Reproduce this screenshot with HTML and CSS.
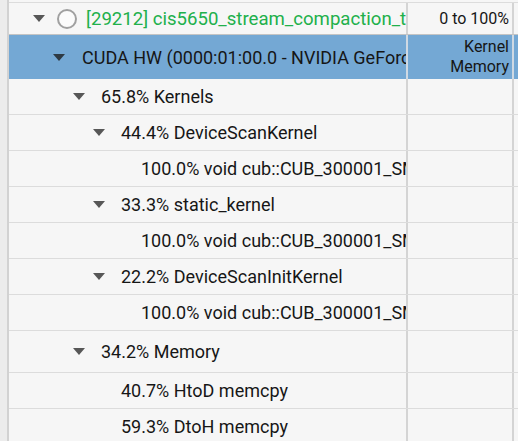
FILE: index.html
```html
<!DOCTYPE html>
<html>
<head>
<meta charset="utf-8">
<link rel="stylesheet" href="styles.css">
</head>
<body>
<div class="view">
  <div class="strip"></div>
  <div class="table">
    <div class="row row-process">
      <div class="c1 lvl0">
        <span class="toggle"><svg width="12" height="7" viewBox="0 0 12 7"><path d="M0 0H12L6 7Z"/></svg></span>
        <span class="ring"></span>
        <span class="label green">[29212] cis5650_stream_compaction_test</span>
      </div>
      <div class="c2">0 to 100%</div>
      <div class="c3"></div>
    </div>
    <div class="row row-selected">
      <div class="c1 lvl1">
        <span class="toggle"><svg width="12" height="7" viewBox="0 0 12 7"><path d="M0 0H12L6 7Z"/></svg></span>
        <span class="label">CUDA HW (0000:01:00.0 - NVIDIA GeForce RTX 3070 Laptop GPU)</span>
      </div>
      <div class="c2 two"><span class="line">Kernel</span><span class="line">Memory</span></div>
      <div class="c3"></div>
    </div>
    <div class="row">
      <div class="c1 lvl2">
        <span class="toggle"><svg width="12" height="7" viewBox="0 0 12 7"><path d="M0 0H12L6 7Z"/></svg></span>
        <span class="label">65.8% Kernels</span>
      </div>
      <div class="c2"></div>
      <div class="c3"></div>
    </div>
    <div class="row">
      <div class="c1 lvl3">
        <span class="toggle"><svg width="12" height="7" viewBox="0 0 12 7"><path d="M0 0H12L6 7Z"/></svg></span>
        <span class="label">44.4% DeviceScanKernel</span>
      </div>
      <div class="c2"></div>
      <div class="c3"></div>
    </div>
    <div class="row">
      <div class="c1 lvl4">
        <span class="toggle"></span>
        <span class="label">100.0% void cub::CUB_300001_SM_860_NS::DeviceScanKernel</span>
      </div>
      <div class="c2"></div>
      <div class="c3"></div>
    </div>
    <div class="row">
      <div class="c1 lvl3">
        <span class="toggle"><svg width="12" height="7" viewBox="0 0 12 7"><path d="M0 0H12L6 7Z"/></svg></span>
        <span class="label">33.3% static_kernel</span>
      </div>
      <div class="c2"></div>
      <div class="c3"></div>
    </div>
    <div class="row">
      <div class="c1 lvl4">
        <span class="toggle"></span>
        <span class="label">100.0% void cub::CUB_300001_SM_860_NS::static_kernel</span>
      </div>
      <div class="c2"></div>
      <div class="c3"></div>
    </div>
    <div class="row">
      <div class="c1 lvl3">
        <span class="toggle"><svg width="12" height="7" viewBox="0 0 12 7"><path d="M0 0H12L6 7Z"/></svg></span>
        <span class="label">22.2% DeviceScanInitKernel</span>
      </div>
      <div class="c2"></div>
      <div class="c3"></div>
    </div>
    <div class="row">
      <div class="c1 lvl4">
        <span class="toggle"></span>
        <span class="label">100.0% void cub::CUB_300001_SM_860_NS::DeviceScanInitKernel</span>
      </div>
      <div class="c2"></div>
      <div class="c3"></div>
    </div>
    <div class="row row-tall">
      <div class="c1 lvl2">
        <span class="toggle"><svg width="12" height="7" viewBox="0 0 12 7"><path d="M0 0H12L6 7Z"/></svg></span>
        <span class="label">34.2% Memory</span>
      </div>
      <div class="c2"></div>
      <div class="c3"></div>
    </div>
    <div class="row">
      <div class="c1 lvl3">
        <span class="toggle"></span>
        <span class="label">40.7% HtoD memcpy</span>
      </div>
      <div class="c2"></div>
      <div class="c3"></div>
    </div>
    <div class="row">
      <div class="c1 lvl3">
        <span class="toggle"></span>
        <span class="label">59.3% DtoH memcpy</span>
      </div>
      <div class="c2"></div>
      <div class="c3"></div>
    </div>
  </div>
</div>
</body>
</html>
```
FILE: styles.css
```css
* {
  box-sizing: border-box;
}
html, body {
  margin: 0;
  padding: 0;
  background: #f6f6f6;
  overflow: hidden;
}
body {
  width: 518px;
  height: 441px;
  font-family: Roboto, "Liberation Sans", sans-serif;
  color: #161616;
}
.view {
  display: flex;
  height: 441px;
}
.strip {
  width: 9px;
  flex: none;
  background: #ececec;
  border-right: 2px solid #d2d2d2;
}
.table {
  flex: 1;
  padding-top: 2px;
  min-width: 0;
  overflow: hidden;
}
.row {
  display: flex;
  height: 36px;
  border-bottom: 1px solid #dcdcdc;
}
.row-process {
  height: 32px;
  border-top: 1px solid #dcdcdc;
  border-bottom: none;
}
.row-selected {
  height: 45px;
  border-top: 1px solid #c4c4c4;
  border-bottom: none;
  background: #74a8d4;
}
.row-tall {
  height: 42px;
}
.c1 {
  width: 399px;
  flex: none;
  display: flex;
  align-items: center;
  overflow: hidden;
  white-space: nowrap;
  font-size: 18px;
  border-right: 2px solid #d4d4d4;
}
.c2 {
  width: 106px;
  flex: none;
  padding-right: 3px;
  display: flex;
  align-items: center;
  justify-content: flex-end;
  font-size: 16px;
  white-space: nowrap;
  overflow: hidden;
  border-right: 2px solid #d4d4d4;
}
.c2.two {
  display: block;
  text-align: right;
  line-height: 20px;
  padding-top: 2px;
}
.c2.two .line {
  display: block;
}
.row-selected .c1,
.row-selected .c2 {
  border-right-color: #cfd9e3;
}
.c3 {
  flex: 1;
}
.toggle {
  width: 12px;
  flex: none;
  margin-right: 16px;
  display: flex;
  align-items: center;
}
.toggle svg {
  display: block;
  fill: #575757;
}
.row-selected .toggle svg {
  fill: #2e3a44;
}
.lvl0 { padding-left: 24px; }
.lvl1 { padding-left: 44px; }
.lvl2 { padding-left: 64px; }
.lvl3 { padding-left: 84px; }
.lvl4 { padding-left: 104px; }
.lvl0 .toggle { margin-right: 12px; }
.lvl1 .toggle { margin-right: 17px; }
.ring {
  width: 20px;
  height: 20px;
  flex: none;
  border: 2px solid #a0a0a0;
  border-radius: 50%;
  background: #fbfbfb;
  margin-right: 9px;
}
.label {
  flex: none;
}
.green {
  color: #21b04b;
  font-size: 18.6px;
}
```
